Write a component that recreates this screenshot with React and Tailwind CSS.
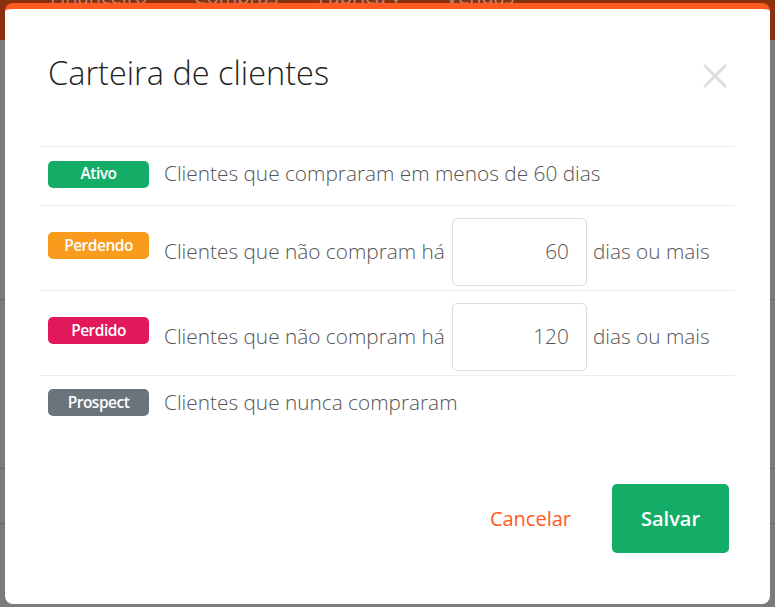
import React from "react";

const rows = [
  { label: "Ativo", color: "bg-[#14ad67]", text: "Clientes que compraram em menos de 60 dias", h: "h-[59px] pb-[4px]" },
  { label: "Perdendo", color: "bg-[#f99b1d]", text: "Clientes que não compram há", days: "60", h: "h-[85px] pt-[7px]" },
  { label: "Perdido", color: "bg-[#e2185b]", text: "Clientes que não compram há", days: "120", h: "h-[85px] pt-[7px]" },
  { label: "Prospect", color: "bg-[#6b737d]", text: "Clientes que nunca compraram", h: "h-[56px] pb-[2px]" },
];

const Badge = ({ label, color }) => (
  <span
    className={`${color} w-[101px] h-[27px] rounded-[5px] flex items-center justify-center text-white text-[15.5px] font-semibold tracking-[-0.5px] shrink-0`}
  >
    {label}
  </span>
);

export default function App() {
  return (
    <div
      className="relative w-full h-[607px] overflow-hidden bg-[#7b7b7b]"
      style={{ fontFamily: '"Open Sans", "Liberation Sans", sans-serif' }}
    >
      {/* page behind the overlay */}
      <div className="h-[40px] bg-[#8a310f] flex items-start text-[20px] leading-[28px] text-[#b98a74]">
        <span className="ml-[50px] -mt-[17px]">Financeiro</span>
        <span className="ml-[47px] -mt-[17px]">Compras</span>
        <span className="ml-[40px] -mt-[17px]">Fábrica ▾</span>
        <span className="ml-[45px] -mt-[17px]">Vendas</span>
      </div>
      <div className="flex flex-col">
        <div className="h-[260px] border-b border-[#6a6a6a]" />
        <div className="h-[169px] border-b border-[#6a6a6a]" />
        <div className="h-[55px] border-b border-[#6a6a6a]" />
      </div>

      {/* modal */}
      <div className="absolute left-[5px] top-[3px] w-[765px] h-[601px] bg-white rounded-[8px] border-t-[6px] border-[#ff5a1f] flex flex-col">
        <div className="flex items-start justify-between pl-[43px] pr-[43px] pt-[43px] h-[137px]">
          <h1 className="text-[32.5px] leading-[42px] font-light text-[#1f1f1f]">Carteira de clientes</h1>
          <svg width="24" height="24" viewBox="0 0 24 24" className="mt-[12px]">
            <path d="M1 1 L23 23 M23 1 L1 23" stroke="#dedede" strokeWidth="3" />
          </svg>
        </div>

        <div className="mx-[35px]">
          {rows.map((r) => (
            <div
              key={r.label}
              className={`${r.h} flex items-center px-[8px] border-t border-[#ececec]`}
            >
              <div className={r.days ? "-mt-[12px]" : ""}>
                <Badge label={r.label} color={r.color} />
              </div>
              <span className="ml-[15px] text-[20.8px] text-[#555] font-light whitespace-nowrap">
                {r.text}
              </span>
              {r.days && (
                <>
                  <div className="ml-[7px] w-[135px] h-[68px] border border-[#dcdcdc] rounded-[5px] flex items-center justify-end pr-[17px] text-[20.8px] text-[#555] font-light">
                    {r.days}
                  </div>
                  <span className="ml-[6px] text-[20.8px] text-[#555] font-light whitespace-nowrap">
                    dias ou mais
                  </span>
                </>
              )}
            </div>
          ))}
        </div>

        <div className="mt-auto mb-[51px] flex items-center justify-end pr-[41px]">
          <button className="text-[20px] text-[#ff5a1f] mr-[41px]">Cancelar</button>
          <button className="w-[117px] h-[69px] rounded-[5px] bg-[#14ad67] text-white text-[20px] font-semibold">
            Salvar
          </button>
        </div>
      </div>
    </div>
  );
}
